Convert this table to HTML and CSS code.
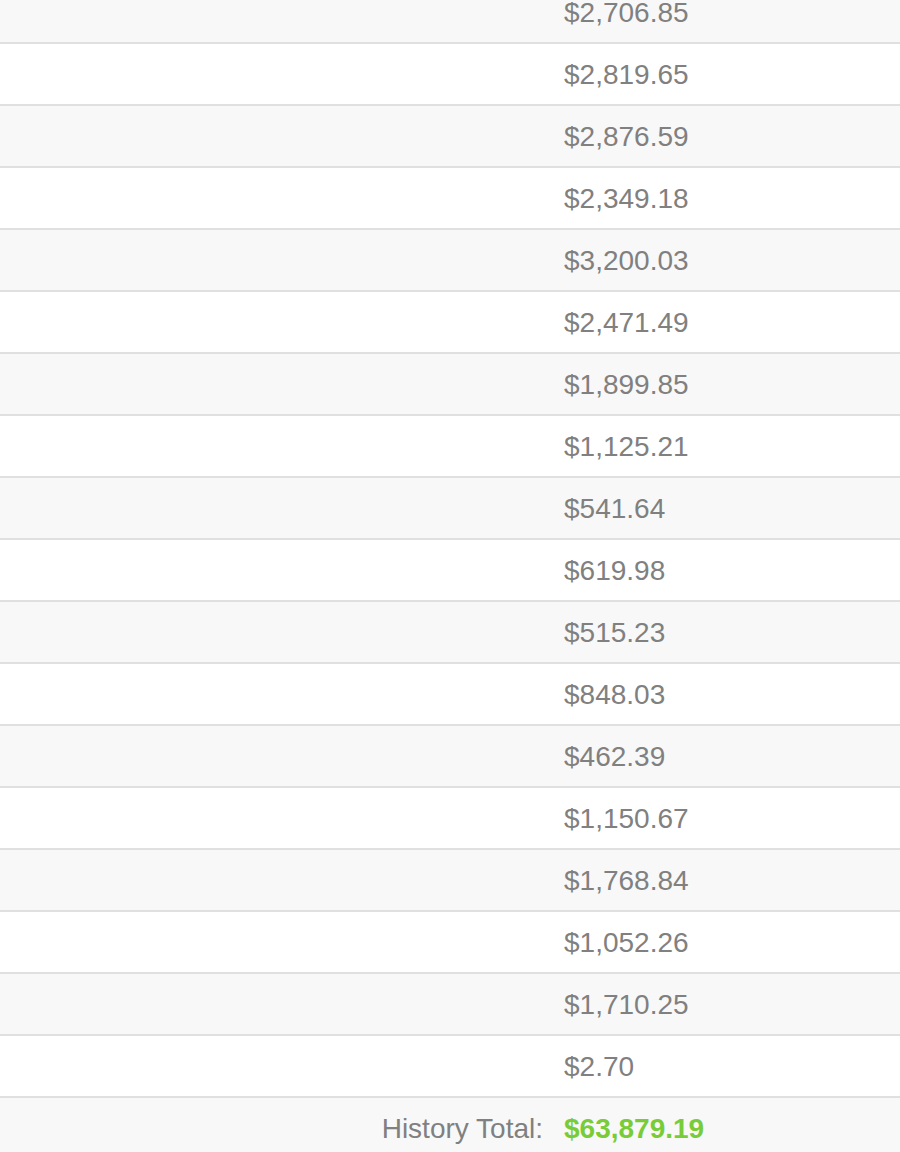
FILE: index.html
```html
<!DOCTYPE html>
<html>
<head>
<meta charset="utf-8">
<link rel="stylesheet" href="styles.css">
</head>
<body>
<div class="history">
  <div class="row alt"><div class="label"></div><div class="amount">$2,706.85</div></div>
  <div class="row"><div class="label"></div><div class="amount">$2,819.65</div></div>
  <div class="row alt"><div class="label"></div><div class="amount">$2,876.59</div></div>
  <div class="row"><div class="label"></div><div class="amount">$2,349.18</div></div>
  <div class="row alt"><div class="label"></div><div class="amount">$3,200.03</div></div>
  <div class="row"><div class="label"></div><div class="amount">$2,471.49</div></div>
  <div class="row alt"><div class="label"></div><div class="amount">$1,899.85</div></div>
  <div class="row"><div class="label"></div><div class="amount">$1,125.21</div></div>
  <div class="row alt"><div class="label"></div><div class="amount">$541.64</div></div>
  <div class="row"><div class="label"></div><div class="amount">$619.98</div></div>
  <div class="row alt"><div class="label"></div><div class="amount">$515.23</div></div>
  <div class="row"><div class="label"></div><div class="amount">$848.03</div></div>
  <div class="row alt"><div class="label"></div><div class="amount">$462.39</div></div>
  <div class="row"><div class="label"></div><div class="amount">$1,150.67</div></div>
  <div class="row alt"><div class="label"></div><div class="amount">$1,768.84</div></div>
  <div class="row"><div class="label"></div><div class="amount">$1,052.26</div></div>
  <div class="row alt"><div class="label"></div><div class="amount">$1,710.25</div></div>
  <div class="row"><div class="label"></div><div class="amount">$2.70</div></div>
  <div class="row alt total"><div class="label">History Total:</div><div class="amount">$63,879.19</div></div>
</div>
</body>
</html>
```
FILE: styles.css
```css
html, body {
  margin: 0;
  padding: 0;
  background: #ffffff;
}
body {
  font-family: "Liberation Sans", Arial, Helvetica, sans-serif;
  color: #808080;
  overflow: hidden;
}
.history {
  margin-top: -18px;
}
.row {
  display: grid;
  grid-template-columns: 1fr 336px;
  height: 60px;
  align-items: center;
  border-bottom: 2px solid #e0e0e0;
  background: #ffffff;
  font-size: 28px;
}
.row.alt {
  background: #f8f8f8;
}
.label,
.amount {
  padding-top: 2px;
}
.label {
  text-align: right;
  padding-right: 21px;
}
.total {
  border-bottom: none;
}
.total .amount {
  color: #78cc37;
  font-weight: bold;
}
```
